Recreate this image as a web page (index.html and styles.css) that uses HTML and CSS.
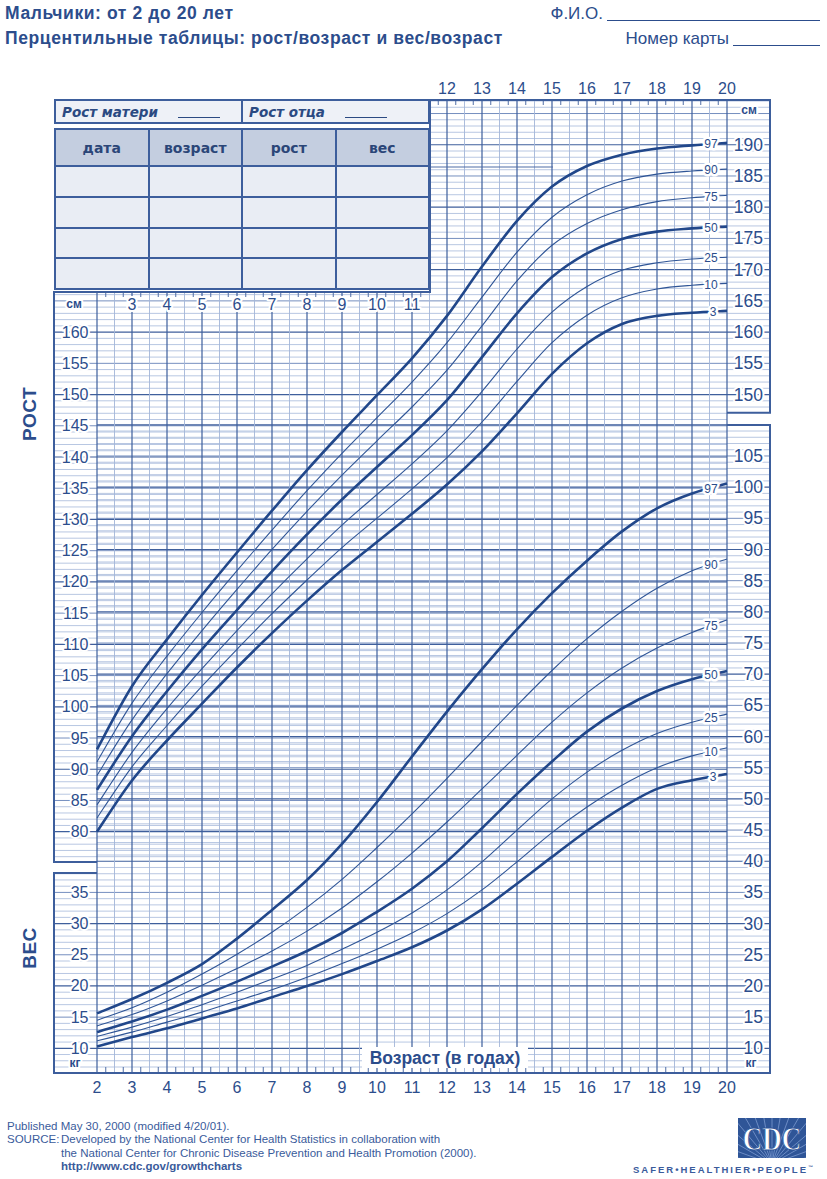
FILE: index.html
```html
<!DOCTYPE html>
<html lang="ru">
<head>
<meta charset="utf-8">
<title>Мальчики: от 2 до 20 лет — рост/возраст и вес/возраст</title>
<link rel="stylesheet" href="styles.css">
</head>
<body>
<div class="page">
  <header class="header">
    <div class="hrow">
      <h1 class="title">Мальчики: от 2 до 20 лет</h1>
      <div class="field">Ф.И.О.<span class="blank blank-name"></span></div>
    </div>
    <div class="hrow">
      <h2 class="title">Перцентильные таблицы: рост/возраст и вес/возраст</h2>
      <div class="field">Номер карты<span class="blank blank-card"></span></div>
    </div>
  </header>

  <main class="chart">
    <svg class="plot" width="827" height="1040" viewBox="0 60 827 1040">
      <g id="grid"></g>
      <line class="g-artifact" x1="430" y1="167" x2="553" y2="167"/>
      <path class="frame" d="M97 862 H54 V292 H430 V100 H770 V412.7 H727"/>
      <path class="frame" d="M727 425 H770 V1073 H54 V873 H97"/>
      <g id="curves"></g>

      <!-- top age labels -->
      <g class="ax ax-m">
        <text x="447" y="88">12</text><text x="482" y="88">13</text><text x="517" y="88">14</text>
        <text x="552" y="88">15</text><text x="587" y="88">16</text><text x="622" y="88">17</text>
        <text x="657" y="88">18</text><text x="692" y="88">19</text><text x="727" y="88">20</text>
      </g>
      <!-- inner age labels -->
      <g class="ax ax-m">
        <text x="132" y="304.5">3</text><text x="167" y="304.5">4</text><text x="202" y="304.5">5</text>
        <text x="237" y="304.5">6</text><text x="272" y="304.5">7</text><text x="307" y="304.5">8</text>
        <text x="342" y="304.5">9</text><text x="377" y="304.5">10</text><text x="412" y="304.5">11</text>
      </g>
      <!-- bottom age labels -->
      <g class="ax ax-m">
        <text x="97" y="1087">2</text><text x="132" y="1087">3</text><text x="167" y="1087">4</text>
        <text x="202" y="1087">5</text><text x="237" y="1087">6</text><text x="272" y="1087">7</text>
        <text x="307" y="1087">8</text><text x="342" y="1087">9</text><text x="377" y="1087">10</text>
        <text x="412" y="1087">11</text><text x="447" y="1087">12</text><text x="482" y="1087">13</text>
        <text x="517" y="1087">14</text><text x="552" y="1087">15</text><text x="587" y="1087">16</text>
        <text x="622" y="1087">17</text><text x="657" y="1087">18</text><text x="692" y="1087">19</text>
        <text x="727" y="1087">20</text>
      </g>

      <!-- left stature scale -->
      <g class="ax ax-e">
        <text x="88.5" y="332.1">160</text><text x="88.5" y="363.3">155</text><text x="88.5" y="394.55">150</text>
        <text x="88.5" y="425.8">145</text><text x="88.5" y="457">140</text><text x="88.5" y="488.2">135</text>
        <text x="88.5" y="519.45">130</text><text x="88.5" y="550.7">125</text><text x="88.5" y="581.9">120</text>
        <text x="88.5" y="613.1">115</text><text x="88.5" y="644.35">110</text><text x="88.5" y="675.6">105</text>
        <text x="88.5" y="706.8">100</text><text x="88.5" y="738">95</text><text x="88.5" y="769.25">90</text>
        <text x="88.5" y="800.5">85</text><text x="88.5" y="831.7">80</text>
      </g>
      <!-- left weight scale -->
      <g class="ax ax-e">
        <text x="88.5" y="892.4">35</text><text x="88.5" y="923.6">30</text><text x="88.5" y="954.8">25</text>
        <text x="88.5" y="985.95">20</text><text x="88.5" y="1017.1">15</text><text x="88.5" y="1048.3">10</text>
      </g>
      <!-- right stature scale -->
      <g class="ax ax-e ax-big">
        <text x="763" y="144.75">190</text><text x="763" y="176">185</text><text x="763" y="207.2">180</text>
        <text x="763" y="238.4">175</text><text x="763" y="269.65">170</text><text x="763" y="300.9">165</text>
        <text x="763" y="332.1">160</text><text x="763" y="363.3">155</text><text x="763" y="394.55">150</text>
      </g>
      <!-- right weight scale -->
      <g class="ax ax-e ax-big">
        <text x="763" y="456">105</text><text x="763" y="487.15">100</text><text x="763" y="518.3">95</text>
        <text x="763" y="549.5">90</text><text x="763" y="580.7">85</text><text x="763" y="611.85">80</text>
        <text x="763" y="643">75</text><text x="763" y="674.2">70</text><text x="763" y="705.4">65</text>
        <text x="763" y="736.55">60</text><text x="763" y="767.7">55</text><text x="763" y="798.9">50</text>
        <text x="763" y="830.1">45</text><text x="763" y="861.25">40</text><text x="763" y="892.4">35</text>
        <text x="763" y="923.6">30</text><text x="763" y="954.8">25</text><text x="763" y="985.95">20</text>
        <text x="763" y="1017.1">15</text><text x="763" y="1048.3">10</text>
      </g>

      <!-- units -->
      <g class="ax unit">
        <text x="74" y="304">см</text><text x="749" y="110">см</text>
        <text x="75" y="1063">кг</text><text x="751" y="1063">кг</text>
      </g>

      <!-- percentile labels: stature -->
      <g class="ax pct">
        <text x="711" y="144.3">97</text><text x="711" y="170.3">90</text><text x="711" y="196.8">75</text>
        <text x="711" y="227.7">50</text><text x="711" y="258.4">25</text><text x="711" y="284.6">10</text>
        <text x="713" y="311.8">3</text>
      </g>
      <!-- percentile labels: weight -->
      <g class="ax pct">
        <text x="711" y="488.6">97</text><text x="711" y="564.8">90</text><text x="711" y="626.2">75</text>
        <text x="711" y="675.1">50</text><text x="711" y="718.2">25</text><text x="711" y="751.8">10</text>
        <text x="713" y="777.1">3</text>
      </g>

      <text class="vtitle" x="29" y="414" transform="rotate(-90 29 414)">РОСТ</text>
      <text class="vtitle" x="29" y="948" transform="rotate(-90 29 948)">ВЕС</text>

      <rect class="xbox" x="362" y="1047" width="166" height="21"/>
      <text class="xtitle" x="445" y="1057.5">Возраст (в годах)</text>
    </svg>

    <div class="info">
      <div class="parents">
        <div class="pcell">Рост матери<span class="pline"></span></div>
        <div class="pcell">Рост отца<span class="pline"></span></div>
      </div>
      <div class="measure">
        <div class="th">дата</div><div class="th">возраст</div><div class="th">рост</div><div class="th">вес</div>
        <div class="td"></div><div class="td"></div><div class="td"></div><div class="td"></div>
        <div class="td"></div><div class="td"></div><div class="td"></div><div class="td"></div>
        <div class="td"></div><div class="td"></div><div class="td"></div><div class="td"></div>
        <div class="td"></div><div class="td"></div><div class="td"></div><div class="td"></div>
      </div>
    </div>
  </main>

  <footer class="footer">
    <div class="source">
      <p class="fline">Published May 30, 2000 (modified 4/20/01).</p>
      <div class="srow">
        <span class="slabel">SOURCE:</span>
        <div>
          <p class="fline">Developed by the National Center for Health Statistics in collaboration with</p>
          <p class="fline">the National Center for Chronic Disease Prevention and Health Promotion (2000).</p>
          <p class="fline url">http://www.cdc.gov/growthcharts</p>
        </div>
      </div>
    </div>
    <div class="cdc">
      <svg class="logo" width="68" height="40" viewBox="0 0 68 40">
        <defs><clipPath id="logoclip"><rect width="68" height="40"/></clipPath></defs>
        <rect width="68" height="40" fill="#2f5597"/>
        <path clip-path="url(#logoclip)" fill="none" stroke="#7392c9" stroke-width="0.9"
          d="M34 46 L-25.1 35.6 M34 46 L-22.4 25.5 M34 46 L-18 16 M34 46 L-12 7.4 M34 46 L-4.6 0 M34 46 L4 -6 M34 46 L13.5 -10.4 M34 46 L23.6 -13.1 M34 46 L34 -14 M34 46 L44.4 -13.1 M34 46 L54.5 -10.4 M34 46 L64 -6 M34 46 L72.6 0 M34 46 L80 7.4 M34 46 L86 16 M34 46 L90.4 25.5 M34 46 L93.1 35.6"/>
        <text class="logotext" transform="translate(34 31.5) scale(1 1.22)" x="0" y="0">CDC</text>
      </svg>
      <div class="tagline">SAFER•HEALTHIER•PEOPLE<sup>™</sup></div>
    </div>
  </footer>
</div>
<script src="script.js"></script>
</body>
</html>
```

FILE: styles.css
```css
* { box-sizing: border-box; }
html, body { margin: 0; padding: 0; background: #fff; }
body { font-family: "Liberation Sans", Arial, sans-serif; color: #2c4d8c; }
.page { width: 827px; height: 1179px; overflow: hidden; }

/* header */
.header { height: 60px; padding: 3px 7px 0 5px; display: flex; flex-direction: column; gap: 5px; }
.hrow { display: flex; justify-content: space-between; align-items: baseline; height: 20px; }
.title { margin: 0; font-size: 17.5px; line-height: 20px; font-weight: bold; letter-spacing: 0.6px; color: #2c4d8c; }
.field { font-size: 17px; line-height: 20px; white-space: nowrap; color: #2c4d8c; }
.blank { display: inline-block; height: 1px; margin-left: 4px; border-bottom: 1.5px solid #2c4d8c; vertical-align: -2px; }
.blank-name { width: 213px; }
.blank-card { width: 87px; }

/* chart */
.chart { position: relative; height: 1040px; }
.plot { display: block; }

.g-minor { stroke: #a6b9da; stroke-width: 0.8; }
.g-mid { stroke: #6682b8; stroke-width: 0.9; }
.g-major { stroke: #3f5f9c; stroke-width: 1.2; }
.g-year { stroke: #3d5e9c; stroke-width: 1.2; }
.g-half { stroke: #a3b6d8; stroke-width: 0.9; }
.g-tick { stroke: #3d5e9c; stroke-width: 0.9; }
.g-artifact { stroke: #4f6ca6; stroke-width: 1.1; }
.frame { fill: none; stroke: #3d5e9c; stroke-width: 2; }
.c-bold { fill: none; stroke: #21478a; stroke-width: 2.6; stroke-linejoin: round; }
.c-thin { fill: none; stroke: #2f5596; stroke-width: 1.1; }

.ax text { font-family: "Liberation Sans", Arial, sans-serif; font-size: 16px; fill: #2c4d8c; stroke: #fff; stroke-width: 4px; stroke-linejoin: round; paint-order: stroke; dominant-baseline: central; }
.ax-m text { text-anchor: middle; }
.ax-e text { text-anchor: end; }
.ax-big text { font-size: 17.5px; }
.unit text { font-size: 12px; font-weight: bold; text-anchor: middle; }
.pct text { font-size: 12px; text-anchor: middle; stroke-width: 5px; }
.vtitle { font-family: "Liberation Sans", Arial, sans-serif; font-size: 19px; font-weight: bold; fill: #2c4d8c; text-anchor: middle; dominant-baseline: central; letter-spacing: 0.5px; }
.xbox { fill: #fff; }
.xtitle { font-family: "Liberation Sans", Arial, sans-serif; font-size: 17.5px; font-weight: bold; fill: #2c4d8c; text-anchor: middle; dominant-baseline: central; }

/* measurement table over the chart */
.info { position: absolute; left: 54px; top: 39px; width: 376px; }
.parents { display: grid; grid-template-columns: 1fr 1fr; gap: 2px; height: 25px; background: #3d5e9c; border: 2px solid #3d5e9c; }
.pcell { background: #eef1f7; display: flex; align-items: center; padding-left: 6px; font-family: "DejaVu Sans", sans-serif; font-style: italic; font-weight: bold; font-size: 13.5px; color: #2b4a82; white-space: nowrap; }
.pline { display: block; width: 42px; height: 13px; margin-left: 20px; border-bottom: 1.5px solid #2b4a82; }
.measure { margin-top: 4px; height: 162px; display: grid; grid-template-columns: repeat(4, 1fr); grid-template-rows: 35px repeat(4, 1fr); gap: 2px; background: #3d5e9c; border: 2px solid #3d5e9c; }
.th { background: #c4cee0; display: flex; align-items: center; justify-content: center; font-family: "DejaVu Sans", sans-serif; font-weight: bold; font-size: 14px; color: #2b4678; }
.td { background: #e9edf4; }

/* footer */
.footer { height: 79px; display: flex; justify-content: space-between; padding: 0 14px 0 7px; color: #3a5b9b; }
.source { padding-top: 20px; font-size: 11.5px; line-height: 13.4px; }
.fline { margin: 0; white-space: nowrap; }
.srow { display: flex; }
.slabel { width: 54px; flex: none; }
.url { font-weight: bold; }
.cdc { display: flex; flex-direction: column; align-items: flex-end; padding-top: 18px; }
.logo { display: block; margin-right: 7px; }
.logotext { font-family: "Liberation Serif", serif; font-weight: bold; font-size: 27px; fill: #fff; stroke: #2f5597; stroke-width: 0.7px; text-anchor: middle; }
.tagline { margin-top: 4px; font-size: 9.5px; font-weight: bold; letter-spacing: 2px; color: #3a5b9b; white-space: nowrap; line-height: 11px; }
.tagline sup { font-size: 5px; letter-spacing: 0; vertical-align: 4px; }
```

FILE: script.js
```js
(function () {
  var NS = 'http://www.w3.org/2000/svg';
  function X(a) { return 97 + (a - 2) * 35; }
  function YS(h) { return 831.7 - (h - 80) * 6.245; }
  function YW(w) { return 1048.3 - (w - 10) * 6.235; }
  var grid = document.getElementById('grid');
  var curves = document.getElementById('curves');

  function el(parent, name, attrs) {
    var e = document.createElementNS(NS, name);
    for (var k in attrs) e.setAttribute(k, attrs[k]);
    parent.appendChild(e);
    return e;
  }
  function ln(x1, y1, x2, y2, cls) {
    el(grid, 'line', { x1: x1.toFixed(2), y1: y1.toFixed(2), x2: x2.toFixed(2), y2: y2.toFixed(2), 'class': cls });
  }
  function cls5(v) { return v % 10 === 0 ? 'g-major' : (v % 5 === 0 ? 'g-mid' : 'g-minor'); }

  var h, w, y, i, a, x;
  /* stature grid (cm) */
  for (h = 76; h <= 197; h++) {
    y = YS(h);
    if (y < 101) continue;
    ln(y >= 292 ? 54 : 430, y, y <= 412.7 ? 770 : 727, y, cls5(h));
  }
  /* weight grid (kg) */
  for (w = 7; w <= 110; w++) {
    y = YW(w);
    ln(y >= 873 ? 54 : 97, y, y >= 425 ? 770 : 727, y, cls5(w));
  }
  /* age lines */
  for (i = 0; i <= 36; i++) {
    a = 2 + i * 0.5; x = X(a);
    ln(x, x < 430 ? 292 : 100, x, 1073, i % 2 === 0 ? 'g-year' : 'g-half');
  }
  /* quarter-year ticks */
  for (i = 0; i < 36; i++) {
    a = 2.25 + i * 0.5; x = X(a);
    ln(x, 1067, x, 1073, 'g-tick');
    if (x < 430) ln(x, 292, x, 297, 'g-tick'); else ln(x, 100, x, 105, 'g-tick');
  }

  /* percentile data, ages 2..20 */
  var stature = {
    '97': [93.2, 103.3, 110.8, 117.9, 124.7, 131.4, 137.9, 144.0, 149.9, 155.8, 162.6, 170.5, 177.8, 183.3, 186.6, 188.4, 189.4, 189.9, 190.3],
    '90': [91.2, 100.6, 108.1, 115.1, 121.8, 128.3, 134.6, 140.6, 146.3, 152.0, 158.3, 165.6, 172.8, 178.4, 182.0, 184.2, 185.3, 185.8, 186.1],
    '75': [89.0, 97.9, 105.3, 112.2, 118.8, 125.2, 131.3, 137.1, 142.6, 148.0, 153.9, 161.0, 168.2, 173.9, 177.4, 179.6, 180.9, 181.5, 181.9],
    '50': [86.7, 95.3, 102.5, 109.2, 115.5, 121.7, 127.6, 133.2, 138.4, 143.5, 149.1, 156.0, 163.0, 168.8, 172.6, 174.9, 176.1, 176.6, 176.9],
    '25': [84.3, 92.7, 99.7, 106.1, 112.2, 118.1, 123.7, 129.1, 134.0, 138.9, 144.2, 150.5, 157.3, 163.2, 167.3, 169.9, 171.1, 171.7, 172.0],
    '10': [82.2, 90.4, 97.0, 103.3, 109.2, 114.9, 120.3, 125.5, 130.2, 134.9, 139.9, 145.6, 152.1, 158.3, 162.7, 165.5, 166.9, 167.5, 167.8],
    '3':  [80.0, 88.2, 94.6, 100.5, 106.3, 111.8, 117.0, 121.9, 126.4, 130.9, 135.6, 140.9, 147.0, 153.3, 158.2, 161.3, 162.6, 163.1, 163.4]
  };
  var weight = {
    '97': [15.6, 17.9, 20.5, 23.5, 27.6, 32.2, 37.0, 42.8, 49.5, 56.8, 64.0, 70.8, 77.2, 83.0, 88.2, 92.9, 96.6, 99.0, 100.6],
    '90': [14.5, 16.5, 19.0, 21.9, 25.1, 28.6, 32.6, 37.1, 42.2, 47.6, 53.3, 59.2, 65.0, 70.6, 75.7, 80.1, 83.8, 86.6, 88.5],
    '75': [13.6, 15.4, 17.6, 20.1, 22.8, 25.6, 28.8, 32.5, 36.7, 41.3, 46.3, 51.6, 57.0, 62.3, 67.0, 71.0, 74.2, 76.7, 78.7],
    '50': [12.6, 14.3, 16.2, 18.4, 20.7, 23.1, 25.6, 28.5, 31.9, 35.6, 40.0, 45.3, 50.8, 56.0, 60.8, 64.5, 67.3, 69.2, 70.5],
    '25': [11.9, 13.4, 15.1, 17.0, 19.0, 21.1, 23.3, 25.9, 28.6, 31.7, 35.4, 39.9, 45.0, 50.0, 54.3, 57.8, 60.5, 62.3, 63.6],
    '10': [11.2, 12.6, 14.2, 15.8, 17.6, 19.4, 21.4, 23.6, 25.9, 28.5, 31.6, 35.4, 39.9, 44.6, 48.7, 52.2, 55.0, 56.9, 58.2],
    '3':  [10.3, 11.8, 13.2, 14.8, 16.4, 18.2, 20.0, 21.9, 24.0, 26.2, 28.9, 32.3, 36.4, 40.7, 44.9, 48.6, 51.6, 53.0, 54.0]
  };

  function f(n) { return n.toFixed(1); }
  function pathD(vals, Y) {
    var pts = vals.map(function (v, j) { return [X(2 + j), Y(v)]; });
    var d = 'M' + f(pts[0][0]) + ' ' + f(pts[0][1]);
    for (var j = 0; j < pts.length - 1; j++) {
      var p0 = pts[j - 1] || pts[j], p1 = pts[j], p2 = pts[j + 1], p3 = pts[j + 2] || p2;
      d += ' C' + f(p1[0] + (p2[0] - p0[0]) / 6) + ' ' + f(p1[1] + (p2[1] - p0[1]) / 6) + ' ' +
        f(p2[0] - (p3[0] - p1[0]) / 6) + ' ' + f(p2[1] - (p3[1] - p1[1]) / 6) + ' ' + f(p2[0]) + ' ' + f(p2[1]);
    }
    return d;
  }
  ['10', '25', '75', '90', '3', '50', '97'].forEach(function (p) {
    var c = (p === '3' || p === '50' || p === '97') ? 'c-bold' : 'c-thin';
    el(curves, 'path', { d: pathD(stature[p], YS), 'class': c });
    el(curves, 'path', { d: pathD(weight[p], YW), 'class': c });
  });
})();
```
